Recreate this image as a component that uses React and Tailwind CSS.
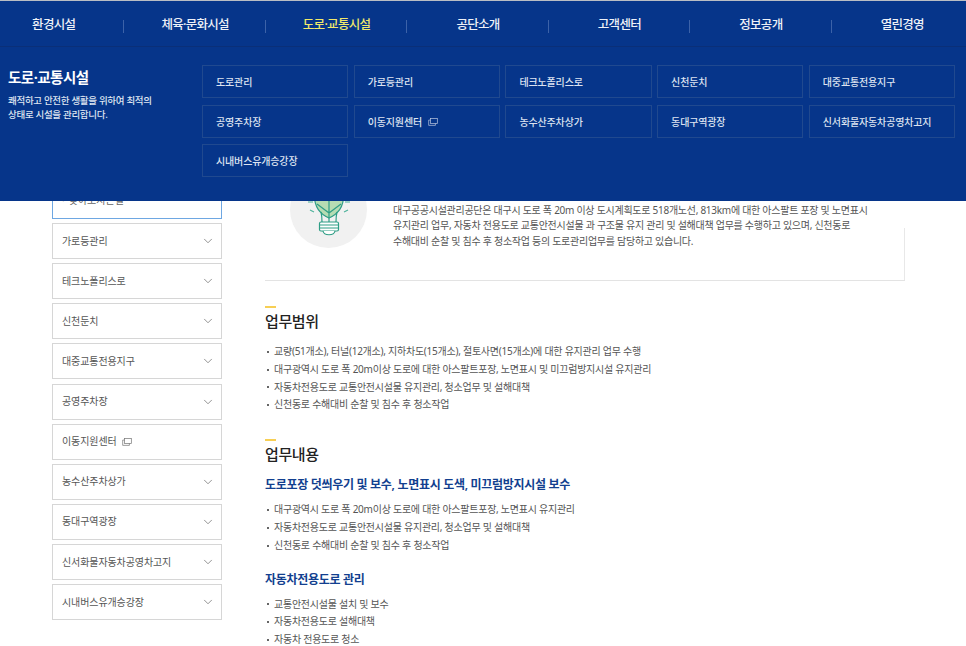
import { ChevronDown } from "lucide-react";

const NAV = ["환경시설", "체육·문화시설", "도로·교통시설", "공단소개", "고객센터", "정보공개", "열린경영"];

const PANEL_LINKS = [
  "도로관리",
  "가로등관리",
  "테크노폴리스로",
  "신천둔치",
  "대중교통전용지구",
  "공영주차장",
  "이동지원센터",
  "농수산주차상가",
  "동대구역광장",
  "신서화물자동차공영차고지",
  "시내버스유개승강장",
];

const SIDE_LINKS = [
  "가로등관리",
  "테크노폴리스로",
  "신천둔치",
  "대중교통전용지구",
  "공영주차장",
  "이동지원센터",
  "농수산주차상가",
  "동대구역광장",
  "신서화물자동차공영차고지",
  "시내버스유개승강장",
];

const FONT = "font-['Noto_Sans','Noto_Sans_CJK_KR',sans-serif]";

function NewWindowIcon({ className }) {
  return (
    <svg viewBox="0 0 12 10" className={className} fill="none" stroke="currentColor" strokeWidth="0.9">
      <rect x="3" y="0.6" width="8.4" height="6.2" />
      <path d="M3 2.6H0.6V9.2H9V6.8" />
    </svg>
  );
}

function BulbIcon() {
  return (
    <svg viewBox="0 0 46 64" className="w-[46px] h-[64px] mb-[11px]" fill="none" stroke="#2f9e86" strokeWidth="1.2">
      {/* leaves */}
      <path d="M23 46C14 42 8.5 34 8.5 24C8.5 14 15 8 23 8C31 8 37.5 14 37.5 24C37.5 34 32 42 23 46Z" fill="#b6dcb3" />
      <path d="M23 8V50M11 32L23 41L35 32M14 20L23 29L32 20" />
      {/* sparks */}
      <path d="M2 30H7M39 30H44M4 38L8 40M42 38L38 40" stroke="#4fb39c" />
      {/* base */}
      <path d="M15 40C16 44 16 47 16 50M31 40C30 44 30 47 30 50" />
      <rect x="13.5" y="50" width="19" height="9" rx="1.5" fill="#fff" />
      <path d="M13.5 53H32.5M13.5 56H32.5" />
      <path d="M17 59C18 64 28 64 29 59" fill="#fff" />
    </svg>
  );
}

function SectionTitle({ children }) {
  return (
    <div>
      <div className="w-[11px] h-[2px] bg-[#f7cf55]" />
      <h2 className="mt-[1px] text-[15px] leading-[24px] font-medium text-[#222] tracking-[-0.4px]">{children}</h2>
    </div>
  );
}

function BulletList({ items }) {
  return (
    <ul className="text-[10px] leading-[17.8px] text-[#555] tracking-[-0.25px]">
      {items.map((item) => (
        <li key={item} className="flex items-center">
          <span className="w-[2px] h-[2px] bg-[#666] ml-[2px] mr-[5px]" />
          {item}
        </li>
      ))}
    </ul>
  );
}

export default function App() {
  return (
    <div className={`relative h-[646px] overflow-hidden bg-white ${FONT}`}>
      {/* Header + open mega menu */}
      <header className="absolute top-0 left-0 right-0 z-10 h-[201px] bg-[#06358a] border-t border-[#b9bdc4]">
        <nav className="h-[46px] border-b border-[#0a2f78] overflow-hidden">
          <ul className="ml-[-17px] w-[990px] h-full grid grid-cols-7">
            {NAV.map((label, i) => (
              <li key={label} className="relative pt-[3px] flex items-center justify-center">
                <span
                  className={`text-[12.5px] font-medium tracking-[-0.7px] ${
                    i === 2 ? "text-[#f1e96a]" : "text-[#eef1f7]"
                  }`}
                >
                  {label}
                </span>
                {i < 6 && <span className="absolute right-0 top-[19px] w-px h-[13px] bg-[#3c62a8]" />}
              </li>
            ))}
          </ul>
        </nav>

        <div className="flex pt-[18px]">
          <div className="w-[202px] pl-[8px] text-white">
            <h3 className="pt-[1px] text-[14.5px] leading-[22px] font-bold tracking-[-0.5px]">도로·교통시설</h3>
            <p className="mt-[6px] text-[9.5px] leading-[14px] font-medium text-[#dfe5f1] tracking-[-0.3px]">
              쾌적하고 안전한 생활을 위하여 최적의
              <br />
              상태로 시설을 관리합니다.
            </p>
          </div>
          <div className="w-[753px] grid grid-cols-5 gap-x-[5.5px] gap-y-[6.5px]">
            {PANEL_LINKS.map((label) => (
              <a
                key={label}
                className="h-[33px] pl-[13px] pt-[2px] flex items-center border border-[#20498f] text-[10px] font-medium text-[#dde3f0] tracking-[-0.15px]"
              >
                {label}
                {label === "이동지원센터" && <NewWindowIcon className="w-[10px] h-[8px] ml-[6px] text-[#b7c4dd]" />}
              </a>
            ))}
          </div>
        </div>
      </header>

      <main className="flex pt-[180px] pl-[52px]">
        {/* Side menu */}
        <aside className="w-[170px] shrink-0">
          <div className="h-[39px] pl-[9px] pt-[12px] border border-[#6ea7e2] text-[10px] text-[#666]">
            <span className="mr-[4px]">·</span>찾아오시는길
          </div>
          <ul className="mt-[4px] flex flex-col gap-[4.15px]">
            {SIDE_LINKS.map((label) => (
              <li
                key={label}
                className="h-[36px] px-[9px] flex items-center justify-between border border-[#d6d6d6] text-[10px] text-[#555] tracking-[-0.1px]"
              >
                {label === "이동지원센터" ? (
                  <span className="flex items-center">
                    {label}
                    <NewWindowIcon className="w-[10px] h-[8px] ml-[5px] text-[#777]" />
                  </span>
                ) : (
                  label
                )}
                {label !== "이동지원센터" && (
                  <ChevronDown className="w-[14px] h-[14px] mr-[-2.5px] text-[#666]" strokeWidth={1.2} />
                )}
              </li>
            ))}
          </ul>
        </aside>

        {/* Content */}
        <section className="ml-[43px] w-[640px] shrink-0">
          <div className="relative h-[101px] border-b border-[#e3e3e3] flex">
            <span className="absolute right-0 top-[48px] bottom-0 w-px bg-[#e8e8e8]" />
            <div className="ml-[25px] mt-[-9px] w-[77px] h-[77px] rounded-full bg-[#f1f1f1] flex items-center justify-center shrink-0">
              <BulbIcon />
            </div>
            <p className="ml-[26px] mt-[23px] w-[500px] text-[10px] leading-[15.3px] text-[#555] tracking-[-0.27px]">
              대구공공시설관리공단은 대구시 도로 폭 20m 이상 도시계획도로 518개노선, 813km에 대한 아스팔트 포장 및 노면표시
              <br />
              유지관리 업무, 자동차 전용도로 교통안전시설물 과 구조물 유지 관리 및 설해대책 업무를 수행하고 있으며, 신천동로
              <br />
              수해대비 순찰 및 침수 후 청소작업 등의 도로관리업무를 담당하고 있습니다.
            </p>
          </div>

          <div className="mt-[25px]">
            <SectionTitle>업무범위</SectionTitle>
            <div className="mt-[10px]">
              <BulletList
                items={[
                  "교량(51개소), 터널(12개소), 지하차도(15개소), 절토사면(15개소)에 대한 유지관리 업무 수행",
                  "대구광역시 도로 폭 20m이상 도로에 대한 아스팔트포장, 노면표시 및 미끄럼방지시설 유지관리",
                  "자동차전용도로 교통안전시설물 유지관리, 청소업무 및 설해대책",
                  "신천동로 수해대비 순찰 및 침수 후 청소작업",
                ]}
              />
            </div>
          </div>

          <div className="mt-[25px]">
            <SectionTitle>업무내용</SectionTitle>
            <h3 className="mt-[10px] text-[12px] leading-[18px] font-semibold text-[#123f8f] tracking-[-0.3px]">
              도로포장 덧씌우기 및 보수, 노면표시 도색, 미끄럼방지시설 보수
            </h3>
            <div className="mt-[7px]">
              <BulletList
                items={[
                  "대구광역시 도로 폭 20m이상 도로에 대한 아스팔트포장, 노면표시 유지관리",
                  "자동차전용도로 교통안전시설물 유지관리, 청소업무 및 설해대책",
                  "신천동로 수해대비 순찰 및 침수 후 청소작업",
                ]}
              />
            </div>
            <h3 className="mt-[16px] text-[12px] leading-[18px] font-semibold text-[#123f8f] tracking-[-0.3px]">
              자동차전용도로 관리
            </h3>
            <div className="mt-[7px]">
              <BulletList
                items={["교통안전시설물 설치 및 보수", "자동차전용도로 설해대책", "자동차 전용도로 청소"]}
              />
            </div>
          </div>
        </section>
      </main>
    </div>
  );
}
